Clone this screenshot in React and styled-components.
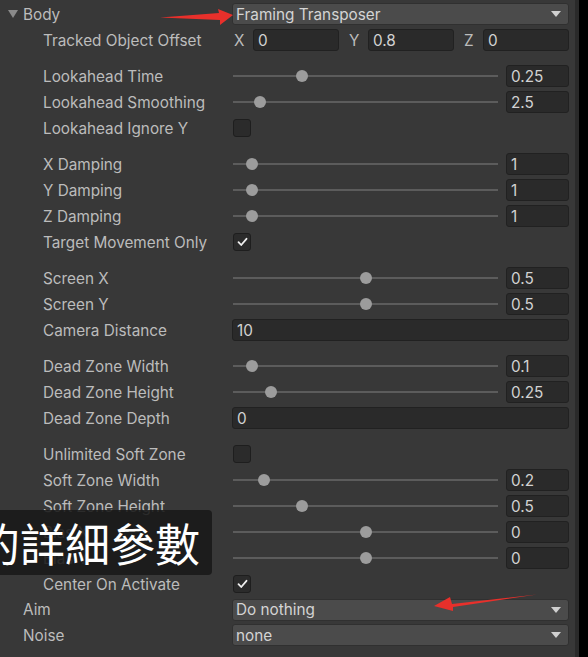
import React from "react";
import styled, { createGlobalStyle } from "styled-components";

const Global = createGlobalStyle`
  html, body { margin: 0; padding: 0; background: #000; }
  body { width: 588px; height: 657px; overflow: hidden; font-family: Inter, "Noto Sans", "Liberation Sans", sans-serif; }
  #root { width: 588px; height: 657px; }
`;

const Page = styled.div`
  position: relative;
  display: flex;
  width: 588px;
  height: 657px;
  overflow: hidden;
  background: #000;
`;

const Panel = styled.div`
  width: 575px;
  height: 100%;
  background: #383838;
  display: flex;
  flex-direction: column;
  padding-top: 1px;
  box-sizing: border-box;
`;

const Strip = styled.div`
  width: 4px;
  height: 100%;
  background: #2a2a2a;
`;

const Group = styled.div`
  display: flex;
  flex-direction: column;
  margin-top: ${(p) => p.$gap || 0}px;
`;

const Row = styled.div`
  display: grid;
  grid-template-columns: 232px 337px;
  height: ${(p) => p.$h || 26}px;
  align-items: center;
`;

const Label = styled.div`
  padding-left: ${(p) => p.$indent}px;
  font-size: 15.3px;
  color: #bcbcbc;
  white-space: nowrap;
  display: flex;
  align-items: center;
`;

const Caret = styled.span`
  display: inline-block;
  width: 0;
  height: 0;
  border-left: 5px solid transparent;
  border-right: 5px solid transparent;
  border-top: 8px solid #8a8a8a;
  margin-right: 5px;
`;

const Field = styled.div`
  height: 22px;
  box-sizing: border-box;
  background: #2a2a2a;
  border: 1px solid #212121;
  border-radius: 3px;
  padding-left: 4px;
  font-size: 15.3px;
  color: #d2d2d2;
  display: flex;
  align-items: center;
  flex: ${(p) => (p.$w ? `0 0 ${p.$w}px` : "1")};
  min-width: 0;
`;

const Dropdown = styled.div`
  height: 22px;
  box-sizing: border-box;
  background: #4b4b4b;
  border: 1px solid #303030;
  border-radius: 3px;
  padding: 0 7px 0 3px;
  font-size: 15.3px;
  color: #d4d4d4;
  display: flex;
  align-items: center;
  justify-content: space-between;
`;

const DropArrow = styled.span`
  width: 0;
  height: 0;
  border-left: 5px solid transparent;
  border-right: 5px solid transparent;
  border-top: 6px solid #d0d0d0;
`;

const Vec = styled.div`
  display: grid;
  grid-template-columns: repeat(3, 1fr);
  column-gap: 8px;
`;

const VecItem = styled.div`
  display: flex;
  align-items: center;
`;

const VecLabel = styled.span`
  width: 21px;
  padding-left: 2px;
  box-sizing: border-box;
  font-size: 15.3px;
  color: #bcbcbc;
`;

const SliderWrap = styled.div`
  display: flex;
  align-items: center;
  gap: 8px;
`;

const Track = styled.div`
  position: relative;
  flex: 1;
  height: 12px;
  margin-left: 1px;
  &::before {
    content: "";
    position: absolute;
    left: 0;
    right: 0;
    top: 5px;
    height: 2px;
    background: #5c5c5c;
  }
`;

const Thumb = styled.div`
  position: absolute;
  top: 0;
  width: 12px;
  height: 12px;
  border-radius: 50%;
  background: #9c9c9c;
`;

const Check = styled.div`
  width: 18px;
  height: 18px;
  box-sizing: border-box;
  margin-left: 1px;
  background: #2b2b2b;
  border: 1px solid #1e1e1e;
  border-radius: 3px;
  display: flex;
  align-items: center;
  justify-content: center;
`;

const Overlay = styled.div`
  position: absolute;
  left: 0;
  top: 510px;
  width: 212px;
  height: 65px;
  background: rgba(24, 24, 24, 0.88);
  border-radius: 0 4px 4px 0;
  overflow: hidden;
  display: flex;
  align-items: center;
`;

const OverlayText = styled.span`
  margin-left: -25px;
  font-family: "Noto Sans CJK TC", "Noto Sans CJK SC", sans-serif;
  font-size: 45px;
  line-height: 1;
  color: #ffffff;
  white-space: nowrap;
`;

const Arrows = styled.svg`
  position: absolute;
  left: 0;
  top: 0;
  pointer-events: none;
`;

const Slider = ({ value, frac }) => (
  <SliderWrap>
    <Track>
      <Thumb style={{ left: `calc(${frac} * (100% - 12px))` }} />
    </Track>
    <Field $w={63}>{value}</Field>
  </SliderWrap>
);

const CheckBox = ({ checked }) => (
  <Check>
    {checked && (
      <svg width="11" height="10" viewBox="0 0 11 10">
        <path d="M1.5 5.2 L4.2 8 L9.5 1.8" fill="none" stroke="#f0f0f0" strokeWidth="1.8" strokeLinecap="round" strokeLinejoin="round" />
      </svg>
    )}
  </Check>
);

const groups = [
  { gap: 10, rows: [
    ["Lookahead Time", "slider", "0.25", 0.25],
    ["Lookahead Smoothing", "slider", "2.5", 2.5 / 30],
    ["Lookahead Ignore Y", "check", false],
  ]},
  { gap: 10, rows: [
    ["X Damping", "slider", "1", 0.05],
    ["Y Damping", "slider", "1", 0.05],
    ["Z Damping", "slider", "1", 0.05],
    ["Target Movement Only", "check", true],
  ]},
  { gap: 10, rows: [
    ["Screen X", "slider", "0.5", 0.5],
    ["Screen Y", "slider", "0.5", 0.5],
    ["Camera Distance", "field", "10"],
  ]},
  { gap: 10, rows: [
    ["Dead Zone Width", "slider", "0.1", 0.05],
    ["Dead Zone Height", "slider", "0.25", 0.125],
    ["Dead Zone Depth", "field", "0"],
  ]},
  { gap: 10, rows: [
    ["Unlimited Soft Zone", "check", false],
    ["Soft Zone Width", "slider", "0.2", 0.1],
    ["Soft Zone Height", "slider", "0.5", 0.25],
    ["Bias X", "slider", "0", 0.5],
    ["Bias Y", "slider", "0", 0.5],
    ["Center On Activate", "check", true],
  ]},
];

const renderControl = (r) => {
  if (r[1] === "slider") return <Slider value={r[2]} frac={r[3]} />;
  if (r[1] === "check") return <CheckBox checked={r[2]} />;
  return <Field>{r[2]}</Field>;
};

export default function App() {
  return (
    <Page>
      <Global />
      <Panel>
        <Row>
          <Label $indent={8}><Caret />Body</Label>
          <Dropdown>Framing Transposer<DropArrow /></Dropdown>
        </Row>
        <Row>
          <Label $indent={43}>Tracked Object Offset</Label>
          <Vec>
            <VecItem><VecLabel>X</VecLabel><Field>0</Field></VecItem>
            <VecItem><VecLabel>Y</VecLabel><Field>0.8</Field></VecItem>
            <VecItem><VecLabel>Z</VecLabel><Field>0</Field></VecItem>
          </Vec>
        </Row>
        {groups.map((g, gi) => (
          <Group key={gi} $gap={g.gap}>
            {g.rows.map((r) => (
              <Row key={r[0]}>
                <Label $indent={43}>{r[0]}</Label>
                {renderControl(r)}
              </Row>
            ))}
          </Group>
        ))}
        <Row $h={25}>
          <Label $indent={23}>Aim</Label>
          <Dropdown>Do nothing<DropArrow /></Dropdown>
        </Row>
        <Row>
          <Label $indent={23}>Noise</Label>
          <Dropdown>none<DropArrow /></Dropdown>
        </Row>
      </Panel>
      <Strip />
      <Overlay>
        <OverlayText>的詳細參數</OverlayText>
      </Overlay>
      <Arrows width="588" height="657" viewBox="0 0 588 657">
        <polygon points="160,17.5 219,13 218,9 233,15 220,25 220,20" fill="#e8302b" />
        <polygon points="537,594.5 452,604 450,597 434,606 453,611 453,607" fill="#e8302b" />
      </Arrows>
    </Page>
  );
}
